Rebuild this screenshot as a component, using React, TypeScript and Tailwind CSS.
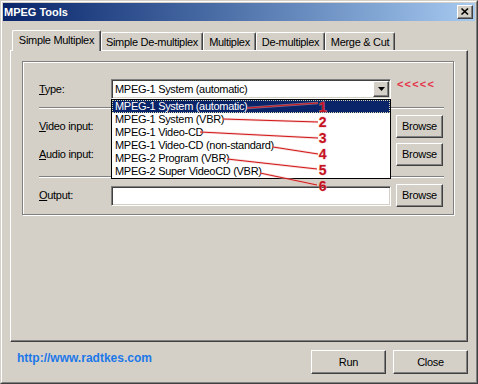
import React from "react";

const btn =
  "flex items-center justify-center bg-[#d4d0c8] border border-t-white border-l-white border-r-[#404040] border-b-[#404040] shadow-[inset_-1px_-1px_0_#808080]";
const field =
  "bg-white border border-t-[#808080] border-l-[#808080] border-r-white border-b-white shadow-[inset_1px_1px_0_#404040,inset_-1px_-1px_0_#d4d0c8]";

const items = [
  "MPEG-1 System (automatic)",
  "MPEG-1 System (VBR)",
  "MPEG-1 Video-CD",
  "MPEG-1 Video-CD (non-standard)",
  "MPEG-2 Program (VBR)",
  "MPEG-2 Super VideoCD (VBR)",
];

const lines = [
  { x1: 247, y1: 108, x2: 318, y2: 103, n: "1", by: 112 },
  { x1: 223, y1: 119, x2: 318, y2: 122, n: "2", by: 127 },
  { x1: 200, y1: 132, x2: 318, y2: 138, n: "3", by: 143 },
  { x1: 273, y1: 147, x2: 318, y2: 154, n: "4", by: 159 },
  { x1: 227, y1: 159, x2: 317, y2: 169, n: "5", by: 175 },
  { x1: 260, y1: 173, x2: 317, y2: 185, n: "6", by: 191 },
];

function Tab({ w, label }: { w: number; label: string }) {
  return (
    <div
      className="h-[18px] bg-[#d4d0c8] border-t border-l border-r border-t-white border-l-white border-r-[#404040] rounded-t-[2px] shadow-[inset_-1px_0_0_#808080] flex items-center justify-center pt-[1px]"
      style={{ width: w }}
    >
      {label}
    </div>
  );
}

export default function App() {
  return (
    <div className="w-[478px] h-[384px] relative overflow-hidden text-black text-[11px] leading-[13px] tracking-[-0.3px] font-['Liberation_Sans',Arial,sans-serif]">
      <div className="w-full h-full bg-[#d4d0c8] border border-t-[#d4d0c8] border-l-[#d4d0c8] border-r-[#404040] border-b-[#404040]">
        <div className="h-full flex flex-col border border-t-white border-l-white border-r-[#808080] border-b-[#808080] p-px">
          {/* Title bar */}
          <div className="h-[18px] shrink-0 flex items-center bg-linear-to-r from-[#0a246a] to-[#a6caf0] pl-[1px] pr-[2px]">
            <span className="text-white font-bold tracking-normal">MPEG Tools</span>
            <div className={`ml-auto w-[16px] h-[14px] ${btn}`}>
              <svg width="14" height="12" viewBox="0 0 14 12">
                <path d="M3.5 2.5 L10 8.5 M10 2.5 L3.5 8.5" stroke="#000" strokeWidth="1.7" />
              </svg>
            </div>
          </div>

          {/* Tabs */}
          <div className="mt-[9px] ml-[9px] h-[20px] flex items-end relative z-10 shrink-0">
            <div className="h-[21px] w-[89px] -mb-px bg-[#d4d0c8] border-t border-l border-r border-t-white border-l-white border-r-[#404040] rounded-t-[2px] shadow-[inset_-1px_0_0_#808080] flex items-center justify-center pb-[1px]">
              Simple Multiplex
            </div>
            <Tab w={102} label="Simple De-multiplex" />
            <Tab w={53} label="Multiplex" />
            <Tab w={69} label="De-multiplex" />
            <Tab w={70} label="Merge & Cut" />
          </div>

          {/* Panel */}
          <div className="ml-[7px] w-[458px] h-[292px] shrink-0 border border-t-white border-l-white border-r-[#404040] border-b-[#404040] shadow-[inset_-1px_-1px_0_#808080] pl-[11px] pt-[10px]">
            <div className="w-[432px] h-[154px] border border-[#808080] shadow-[inset_1px_1px_0_white,1px_1px_0_white] pl-[16px] pt-[17px] flex flex-col">
              {/* Type row */}
              <div className="h-[20px] flex items-center">
                <div className="w-[72px]">
                  <u>T</u>ype:
                </div>
                <div className={`relative w-[280px] h-[20px] p-px flex items-center ${field}`}>
                  <span className="pl-[2px] flex-1">MPEG-1 System (automatic)</span>
                  <div className={`w-[16px] h-[16px] ${btn}`}>
                    <svg width="7" height="4" viewBox="0 0 7 4">
                      <path d="M0 0 H7 L3.5 4 Z" fill="#000" />
                    </svg>
                  </div>
                  {/* Dropdown list */}
                  <div className="absolute left-[-1px] top-[19px] w-[280px] h-[80px] bg-white border border-black z-20 flex flex-col">
                    {items.map((t, i) => (
                      <div
                        key={t}
                        className={
                          i === 0
                            ? "h-[13px] leading-[11px] bg-[#0a246a] text-white border border-dotted border-[#d8d8b0] pl-[2px] whitespace-nowrap"
                            : "h-[13px] leading-[13px] pl-[3px] whitespace-nowrap"
                        }
                      >
                        {t}
                      </div>
                    ))}
                  </div>
                </div>
                <span className="ml-[6px] self-start mt-[-1px] text-[#e4344a] font-bold tracking-[1.2px]">&lt;&lt;&lt;&lt;&lt;</span>
              </div>

              <div className="mt-[8px] w-[405px] h-[2px] border-t border-t-[#808080] border-b border-b-white" />

              {/* Video row */}
              <div className="mt-[6px] h-[23px] flex items-center">
                <div className="w-[72px]">
                  <u>V</u>ideo input:
                </div>
                <div className={`w-[280px] h-[20px] ${field}`} />
                <div className={`ml-[5px] w-[47px] h-[23px] ${btn}`}>Browse</div>
              </div>

              {/* Audio row */}
              <div className="mt-[5px] h-[23px] flex items-center">
                <div className="w-[72px]">
                  <u>A</u>udio input:
                </div>
                <div className={`w-[280px] h-[20px] ${field}`} />
                <div className={`ml-[5px] w-[47px] h-[23px] ${btn}`}>Browse</div>
              </div>

              <div className="mt-[10px] w-[405px] h-[2px] border-t border-t-[#808080] border-b border-b-white" />

              {/* Output row */}
              <div className="mt-[6px] h-[23px] flex items-center">
                <div className="w-[72px]">
                  <u>O</u>utput:
                </div>
                <div className={`w-[280px] h-[20px] ${field}`} />
                <div className={`ml-[5px] w-[47px] h-[23px] ${btn}`}>Browse</div>
              </div>
            </div>
          </div>

          {/* Bottom row */}
          <div className="mt-[8px] h-[24px] flex items-start shrink-0">
            <span className="ml-[14px] mt-[1px] text-[12px] leading-[14px] font-bold tracking-normal text-[#1c78e8]">
              http://www.radtkes.com
            </span>
            <div className="ml-auto mr-[7px] flex gap-[7px]">
              <div className={`w-[75px] h-[24px] ${btn}`}>Run</div>
              <div className={`w-[75px] h-[24px] ${btn}`}>Close</div>
            </div>
          </div>
        </div>
      </div>

      {/* Annotation overlay */}
      <svg className="absolute left-0 top-0 pointer-events-none z-30" width="478" height="384" viewBox="0 0 478 384">
        {lines.map((l) => (
          <g key={l.n}>
            <line x1={l.x1} y1={l.y1} x2={l.x2} y2={l.y2} stroke="#f4b0b0" strokeWidth="2.5" opacity="0.5" />
            <line x1={l.x1} y1={l.y1} x2={l.x2} y2={l.y2} stroke="#d01818" strokeWidth="1" />
            <text
              x={322.5}
              y={l.by}
              textAnchor="middle"
              fontFamily="'Liberation Sans', Arial, sans-serif"
              fontWeight="bold"
              fontSize="14"
              fill="#c41222"
              stroke="#f2a8a8"
              strokeWidth="1"
              paintOrder="stroke"
              strokeOpacity="0.6"
            >
              {l.n}
            </text>
          </g>
        ))}
      </svg>
    </div>
  );
}
